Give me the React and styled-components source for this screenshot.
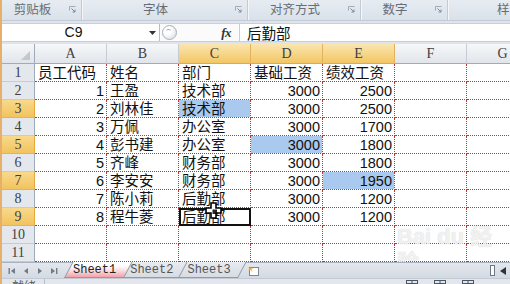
import React from 'react';
import styled, { createGlobalStyle, css } from 'styled-components';

const Global = createGlobalStyle`
  html, body { margin: 0; padding: 0; }
  body {
    width: 510px; height: 284px; overflow: hidden;
    background: #dfe4ea;
    font-family: "Noto Sans CJK SC", sans-serif;
  }
`;

const Frame = styled.div`
  position: relative;
  width: 510px;
  height: 284px;
  overflow: hidden;
  box-sizing: border-box;
  border-left: 2px solid #e6b06a;
  display: flex;
  flex-direction: column;
  background: #dfe4ea;
`;

/* ---------- Ribbon group labels ---------- */
const Ribbon = styled.div`
  height: 21px;
  flex: none;
  display: flex;
  box-sizing: border-box;
  background: linear-gradient(#e7ecf2, #dae1ea);
  border-bottom: 1px solid #c3cbd6;
`;

const Group = styled.div`
  width: ${p => p.$w}px;
  flex: none;
  display: flex;
  align-items: center;
  box-sizing: border-box;
  border-right: 1px solid #c3cad4;
  box-shadow: 1px 0 0 #f4f6f9;
`;

const GroupLabel = styled.span`
  flex: 1;
  text-align: center;
  font: 12.5px/20px "Noto Sans CJK SC", sans-serif;
  color: #666d76;
  white-space: nowrap;
  padding-bottom: 2px;
`;

const Launcher = styled.span`
  width: 18px;
  flex: none;
  display: flex;
  justify-content: center;
  align-items: center;
  padding-bottom: 2px;
`;

const LauncherIcon = () => (
  <svg width="7" height="7" viewBox="0 0 7 7">
    <path d="M0.5 4.5V0.5H6.5" fill="none" stroke="#a2abb6" strokeWidth="1" />
    <path d="M2.5 2.5L6 6M6 3.5V6H3.5" fill="none" stroke="#7d8896" strokeWidth="1" />
  </svg>
);

/* ---------- Formula bar ---------- */
const FormulaRow = styled.div`
  height: 19px;
  flex: none;
  margin: 2px 0;
  display: flex;
  background: #fff;
  box-sizing: border-box;
  border-top: 1px solid #c9cfd7;
  border-bottom: 1px solid #c9cfd7;
`;

const NameBox = styled.div`
  width: 158px;
  flex: none;
  display: flex;
  align-items: center;
  box-sizing: border-box;
  border-right: 1px solid #b9c0ca;
`;

const NameValue = styled.span`
  flex: 1;
  text-align: center;
  font: 14px/17px "Liberation Sans", sans-serif;
  color: #111;
`;

const DropArrow = styled.span`
  width: 14px;
  flex: none;
  display: flex;
  justify-content: center;
`;

const Tools = styled.div`
  width: 80px;
  flex: none;
  display: flex;
  align-items: center;
  box-sizing: border-box;
  border-right: 1px solid #c9cfd7;
  background: #fbfbfc;
  padding-left: 2px;
`;

const Knob = styled.span`
  position: relative;
  width: 15px;
  height: 15px;
  border-radius: 50%;
  box-sizing: border-box;
  border: 1px solid #a8b0ba;
  background: radial-gradient(circle at 35% 35%, #ffffff 0 30%, #e4e8ed 70%);
  &::after {
    content: '';
    position: absolute;
    left: 3px; top: 3px;
    width: 5px; height: 3px;
    border-radius: 50%;
    border-top: 1px solid #9aa3ad;
  }
`;

const Fx = styled.span`
  margin-left: auto;
  margin-right: 8px;
  font: italic bold 13px/17px "Liberation Serif", serif;
  color: #333;
  letter-spacing: -0.5px;
`;

const FormulaContent = styled.div`
  flex: 1;
  padding-left: 7px;
  font: 14.5px/17px "Noto Sans CJK SC", sans-serif;
  color: #111;
`;

/* ---------- Sheet grid ---------- */
const SheetArea = styled.div`
  position: relative;
  flex: none;
  height: 218px;
  overflow: hidden;
  background: #fff;
`;

const Grid = styled.div`
  display: grid;
  grid-template-columns: 33px repeat(7, 72px);
  grid-template-rows: 20px repeat(11, 18px);
  width: max-content;
`;

const headBg = css`
  background: linear-gradient(#f6f7f9, #e1e5ea);
`;
const hiBg = css`
  background: linear-gradient(#fbe6b0, #f2c664);
`;

const Corner = styled.div`
  position: relative;
  box-sizing: border-box;
  ${headBg};
  border-right: 1px solid #9eabba;
  border-bottom: 1px solid #9eabba;
  &::after {
    content: '';
    position: absolute;
    right: 4px; bottom: 3px;
    border-style: solid;
    border-width: 0 0 9px 9px;
    border-color: transparent transparent #c2c8d0 transparent;
  }
`;

const ColHead = styled.div`
  box-sizing: border-box;
  display: flex;
  align-items: center;
  justify-content: center;
  font: 14px/18px "Liberation Serif", serif;
  color: #3c3f44;
  ${p => (p.$hi ? hiBg : headBg)};
  border-right: 1px solid ${p => (p.$hi ? '#e2b25c' : '#c5ccd5')};
  border-bottom: 1px solid ${p => (p.$hi ? '#e7a93d' : '#9eabba')};
`;

const RowHead = styled.div`
  box-sizing: border-box;
  display: flex;
  align-items: center;
  justify-content: center;
  font: 14px/17px "Liberation Serif", serif;
  color: #3c3f44;
  ${p => (p.$hi ? css`background: linear-gradient(#f8d98c, #f2c35e);` : css`background: #e4e8ed;`)};
  border-right: 1px solid ${p => (p.$hi ? '#e7a93d' : '#9eabba')};
  border-bottom: 1px solid ${p => (p.$hi ? '#e2b25c' : '#c5ccd5')};
`;

const Cell = styled.div`
  box-sizing: border-box;
  display: flex;
  align-items: center;
  justify-content: ${p => (p.$num ? 'flex-end' : 'flex-start')};
  padding: 1px 2px 0 3px;
  font: 14.5px/17px "Liberation Sans", "Noto Sans CJK SC", sans-serif;
  color: #111;
  white-space: nowrap;
  overflow: hidden;
  background: ${p => (p.$sel ? '#a9c9ef' : '#fff')};
  background-clip: padding-box;
  border-right: 1px dotted #c8322e;
  border-bottom: 1px dotted #c8322e;
  ${p => p.$active && css`
    outline: 2px solid #111;
    outline-offset: -2px;
  `}
`;

const Cursor = styled.svg`
  position: absolute;
  left: 203px;
  top: 158px;
`;

const Watermark = styled.div`
  position: absolute;
  left: 395px;
  top: 180px;
  color: rgba(255, 255, 255, 0.75);
  text-shadow: 0 0 1px rgba(150, 150, 150, 0.55);
  pointer-events: none;
`;

const WmLogo = styled.div`
  font: bold 22px/26px "Liberation Sans", "Noto Sans CJK SC", sans-serif;
`;

const WmUrl = styled.div`
  font: 13px/14px "Liberation Sans", sans-serif;
  margin-top: 10px;
  color: rgba(255, 255, 255, 0.8);
`;

/* ---------- Sheet tabs bar ---------- */
const TabBar = styled.div`
  height: 16px;
  flex: none;
  display: flex;
  align-items: stretch;
  box-sizing: border-box;
  background: linear-gradient(#e4e8ed, #d4dae2);
  border-top: 1px solid #a7b2c0;
`;

const Nav = styled.div`
  width: 58px;
  flex: none;
  display: flex;
  align-items: center;
  gap: 6px;
  padding-left: 6px;
  box-sizing: border-box;
`;

const Tabs = styled.div`
  display: flex;
  align-items: stretch;
  padding-left: 4px;
`;

const Tab = styled.div`
  position: relative;
  z-index: ${p => (p.$active ? 3 : 1)};
  padding: 0 8px 0 9px;
  margin-right: -3px;
  font: 12px/14px "Liberation Mono", monospace;
  color: ${p => (p.$active ? '#222' : '#555')};
  &::before {
    content: '';
    position: absolute;
    inset: -1px 0 0 0;
    z-index: -1;
    box-sizing: border-box;
    border: 1px solid #8e9bab;
    border-top: none;
    transform: skewX(-28deg);
    transform-origin: bottom left;
    background: ${p =>
      p.$active
        ? 'linear-gradient(#ffffff 25%, #fbe0e2 55%, #f3a2a9)'
        : 'linear-gradient(#e8ebef, #d7dce3)'};
  }
`;

const NewSheet = styled.div`
  display: flex;
  align-items: center;
  padding-left: 12px;
`;

const Spacer = styled.div`
  flex: 1;
`;

const SplitBox = styled.div`
  width: 5px;
  height: 11px;
  align-self: center;
  box-sizing: border-box;
  border: 1px solid #6d7886;
  background: #fff;
  margin-right: 5px;
`;

const ScrollArrow = styled.div`
  width: 10px;
  display: flex;
  align-items: center;
`;

/* ---------- Status bar ---------- */
const StatusBar = styled.div`
  flex: 1;
  display: flex;
  align-items: flex-start;
  overflow: hidden;
  background: #e3e7ed;
  border-top: 1px solid #c3cad4;
  font: 12px/12px "Noto Sans CJK SC", sans-serif;
  color: #555;
`;

const StatusCell = styled.div`
  padding: 1px 8px 0 10px;
  border-right: 1px solid #b6bec9;
  height: 12px;
`;

const ViewButtons = styled.div`
  margin-left: auto;
  margin-right: 36px;
  display: flex;
  gap: 16px;
  padding-top: 1px;
`;

const ViewIcon = () => (
  <svg width="12" height="8" viewBox="0 0 12 8">
    <rect x="0.5" y="0.5" width="11" height="9" fill="none" stroke="#4b5562" />
    <path d="M0.5 3.5H11.5M6 0.5V8" stroke="#4b5562" />
  </svg>
);

const Tri = ({ dir, bar }) => (
  <svg width="8" height="8" viewBox="0 0 8 8">
    {dir === 'left' ? (
      <>
        {bar && <rect x="0.5" y="1" width="1.4" height="6" fill="#6f7b89" />}
        <path d={bar ? 'M7 1L3 4L7 7Z' : 'M6 1L2 4L6 7Z'} fill="#6f7b89" />
      </>
    ) : (
      <>
        <path d={bar ? 'M1 1L5 4L1 7Z' : 'M2 1L6 4L2 7Z'} fill="#6f7b89" />
        {bar && <rect x="6" y="1" width="1.4" height="6" fill="#6f7b89" />}
      </>
    )}
  </svg>
);

const cols = ['A', 'B', 'C', 'D', 'E', 'F', 'G'];
const hiCols = new Set(['C', 'D', 'E']);
const hiRows = new Set([3, 5, 7, 9]);
const data = [
  ['员工代码', '姓名', '部门', '基础工资', '绩效工资'],
  [1, '王盈', '技术部', 3000, 2500],
  [2, '刘林佳', '技术部', 3000, 2500],
  [3, '万佩', '办公室', 3000, 1700],
  [4, '彭书建', '办公室', 3000, 1800],
  [5, '齐峰', '财务部', 3000, 1800],
  [6, '李安安', '财务部', 3000, 1950],
  [7, '陈小莉', '后勤部', 3000, 1200],
  [8, '程牛菱', '后勤部', 3000, 1200],
  [],
  [],
];
const selected = new Set(['3-2', '5-3', '7-4']);
const activeCell = '9-2';

const groups = [
  { w: 80, label: '剪贴板' },
  { w: 166, label: '字体' },
  { w: 113, label: '对齐方式' },
  { w: 87, label: '数字' },
  { w: 142, label: '样式' },
];

export default function App() {
  return (
    <>
      <Global />
      <Frame>
        <Ribbon>
          {groups.map(g => (
            <Group key={g.label} $w={g.w}>
              <GroupLabel>{g.label}</GroupLabel>
              <Launcher>
                <LauncherIcon />
              </Launcher>
            </Group>
          ))}
        </Ribbon>

        <FormulaRow>
          <NameBox>
            <NameValue>C9</NameValue>
            <DropArrow>
              <svg width="7" height="4" viewBox="0 0 7 4">
                <path d="M0 0H7L3.5 4Z" fill="#333" />
              </svg>
            </DropArrow>
          </NameBox>
          <Tools>
            <Knob />
            <Fx>fx</Fx>
          </Tools>
          <FormulaContent>后勤部</FormulaContent>
        </FormulaRow>

        <SheetArea>
          <Grid>
            <Corner />
            {cols.map(c => (
              <ColHead key={c} $hi={hiCols.has(c)}>{c}</ColHead>
            ))}
            {data.map((row, ri) => {
              const r = ri + 1;
              return (
                <React.Fragment key={r}>
                  <RowHead $hi={hiRows.has(r)}>{r}</RowHead>
                  {cols.map((c, ci) => {
                    const v = row[ci];
                    const key = `${r}-${ci}`;
                    return (
                      <Cell
                        key={key}
                        $num={typeof v === 'number'}
                        $sel={selected.has(key)}
                        $active={key === activeCell}
                      >
                        {v ?? ''}
                      </Cell>
                    );
                  })}
                </React.Fragment>
              );
            })}
          </Grid>
          <Watermark>
            <WmLogo>Bai du 经验</WmLogo>
            <WmUrl>jingyan.baidu.com</WmUrl>
          </Watermark>
          <Cursor width="17" height="17" viewBox="0 0 17 17">
            <path
              d="M6 1H11V6H16V11H11V16H6V11H1V6H6Z"
              fill="#fff"
              stroke="#000"
              strokeWidth="1.6"
            />
            <path d="M7.5 7.5H12V12H7.5Z" fill="#000" opacity="0.85" />
          </Cursor>
        </SheetArea>

        <TabBar>
          <Nav>
            <Tri dir="left" bar />
            <Tri dir="left" />
            <Tri dir="right" />
            <Tri dir="right" bar />
          </Nav>
          <Tabs>
            <Tab $active>Sheet1</Tab>
            <Tab>Sheet2</Tab>
            <Tab>Sheet3</Tab>
          </Tabs>
          <NewSheet>
            <svg width="12" height="11" viewBox="0 0 12 11">
              <rect x="1.5" y="2.5" width="9" height="8" fill="#fff" stroke="#7d8896" />
              <path d="M2 1L3 3.5L5.5 3L3.5 4.5L4.5 7L2.5 5L0.5 6L1.5 4L0 2.5L2 3Z" fill="#f0a830" />
            </svg>
          </NewSheet>
          <Spacer />
          <SplitBox />
          <ScrollArrow>
            <svg width="6" height="8" viewBox="0 0 6 8">
              <path d="M6 0L0 4L6 8Z" fill="#2d3540" />
            </svg>
          </ScrollArrow>
        </TabBar>

        <StatusBar>
          <StatusCell>就绪</StatusCell>
          <ViewButtons>
            <ViewIcon />
            <ViewIcon />
            <ViewIcon />
          </ViewButtons>
        </StatusBar>
      </Frame>
    </>
  );
}
